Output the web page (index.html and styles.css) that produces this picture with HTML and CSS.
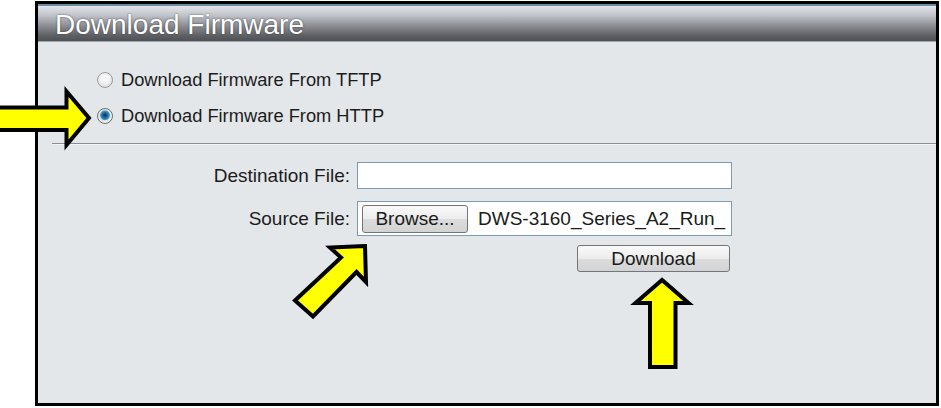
FILE: index.html
```html
<!DOCTYPE html>
<html>
<head>
<meta charset="utf-8">
<link rel="stylesheet" href="styles.css">
</head>
<body>
<div class="page">
  <div class="frame">
    <div class="titlebar"><span class="title">Download Firmware</span></div>
    <div class="content">
      <div class="radios">
        <label class="radio-row"><span class="radio"></span><span>Download Firmware From TFTP</span></label>
        <label class="radio-row"><span class="radio checked"></span><span>Download Firmware From HTTP</span></label>
      </div>
      <div class="sep"></div>
      <div class="form">
        <div class="lbl">Destination File:</div>
        <div class="input"></div>
        <div class="lbl lbl-src">Source File:</div>
        <div class="filebox"><span class="btn browse">Browse...</span><span class="fname">DWS-3160_Series_A2_Run_</span></div>
        <div class="spacer"></div>
        <div class="btnrow"><span class="btn dl">Download</span></div>
      </div>
    </div>
  </div>
  <svg class="arrows" width="941" height="408" viewBox="0 0 941 408">
    <polygon points="-5,107.5 66.5,107.5 66.5,91.5 89,118 66.5,145 66.5,130 -5,130" />
    <polygon points="365,246 330,247.5 341,257.5 295,300.5 313,316.5 356.5,272 366,282" />
    <polygon points="662,280 635.5,303 650,303 650,367 675.5,367 675.5,303 688.5,303" />
  </svg>
</div>
</body>
</html>
```

FILE: styles.css
```css
html, body {
  margin: 0;
  padding: 0;
  background: #ffffff;
}
.page {
  position: relative;
  width: 941px;
  height: 408px;
  overflow: hidden;
  font-family: "Liberation Sans", Arial, sans-serif;
}
.frame {
  box-sizing: border-box;
  margin: 1px 0 0 35px;
  width: 904px;
  height: 405px;
  border: 3px solid #000;
  background: #e3e7ea;
  display: flex;
  flex-direction: column;
}
.titlebar {
  box-sizing: border-box;
  height: 38px;
  border-top: 2px solid #6c8aa0;
  border-bottom: 1px solid #9aabb7;
  background: linear-gradient(to bottom, #e2e6ea 0%, #c3c7cd 25%, #8e9096 55%, #5e5f63 85%, #505052 100%);
  display: flex;
  align-items: center;
  padding-left: 17px;
}
.title {
  color: #ffffff;
  font-size: 28px;
  line-height: 32px;
  margin-top: 2px;
  text-shadow: 0 0 2px rgba(40, 40, 40, 0.8);
}
.content {
  flex: 1;
  display: flex;
  flex-direction: column;
}
.radios {
  display: flex;
  flex-direction: column;
  gap: 12px;
  padding: 26px 0 0 59px;
}
.radio-row {
  display: flex;
  align-items: center;
  gap: 8px;
  height: 24px;
  font-size: 18.3px;
  color: #1c1c1c;
}
.radio {
  box-sizing: border-box;
  width: 16px;
  height: 16px;
  border-radius: 50%;
  border: 1px solid #9a9ea2;
  background: radial-gradient(circle at 50% 40%, #ffffff 0%, #f0f0f0 45%, #cfd1d3 100%);
}
.radio.checked {
  border-color: #6a6e72;
  background: radial-gradient(circle at 50% 45%, #0b2f4c 0%, #1a5f8e 20%, #3f94c8 42%, #d7dde2 50%, #f6f6f6 68%, #c4c6c8 100%);
}
.sep {
  margin: 15px 0 0 14px;
  height: 0;
  border-top: 1px solid #8b8f93;
  border-bottom: 1px solid #f2f4f5;
}
.form {
  display: grid;
  grid-template-columns: 312px 375px;
  column-gap: 7px;
  margin-top: 17px;
  font-size: 19px;
  color: #1c1c1c;
}
.lbl {
  text-align: right;
  display: flex;
  align-items: center;
  justify-content: flex-end;
  height: 27px;
}
.lbl-src {
  margin-top: 12px;
  height: 35px;
}
.input {
  box-sizing: border-box;
  height: 27px;
  background: #ffffff;
  border: 1px solid #7c9bb5;
}
.filebox {
  box-sizing: border-box;
  margin-top: 12px;
  height: 35px;
  background: #ffffff;
  border: 1px solid #7c9bb5;
  display: flex;
  align-items: center;
  padding-left: 4px;
  gap: 10px;
  overflow: hidden;
  white-space: nowrap;
}
.btn {
  box-sizing: border-box;
  display: flex;
  align-items: center;
  justify-content: center;
  border: 1px solid #727678;
  border-radius: 3px;
  background: linear-gradient(to bottom, #fafafa 0%, #ececec 50%, #dcdcdc 51%, #d2d3d4 100%);
  color: #1a1a1a;
  font-size: 19px;
}
.browse {
  width: 106px;
  height: 28px;
  flex: none;
}
.fname {
  color: #1a1a1a;
}
.btnrow {
  display: flex;
  justify-content: flex-end;
  padding-right: 2px;
  margin-top: 9px;
}
.dl {
  width: 153px;
  height: 27px;
}
.arrows {
  position: absolute;
  left: 0;
  top: 0;
  pointer-events: none;
}
.arrows polygon {
  fill: #ffff00;
  stroke: #000;
  stroke-width: 4;
  stroke-linejoin: miter;
}
```
